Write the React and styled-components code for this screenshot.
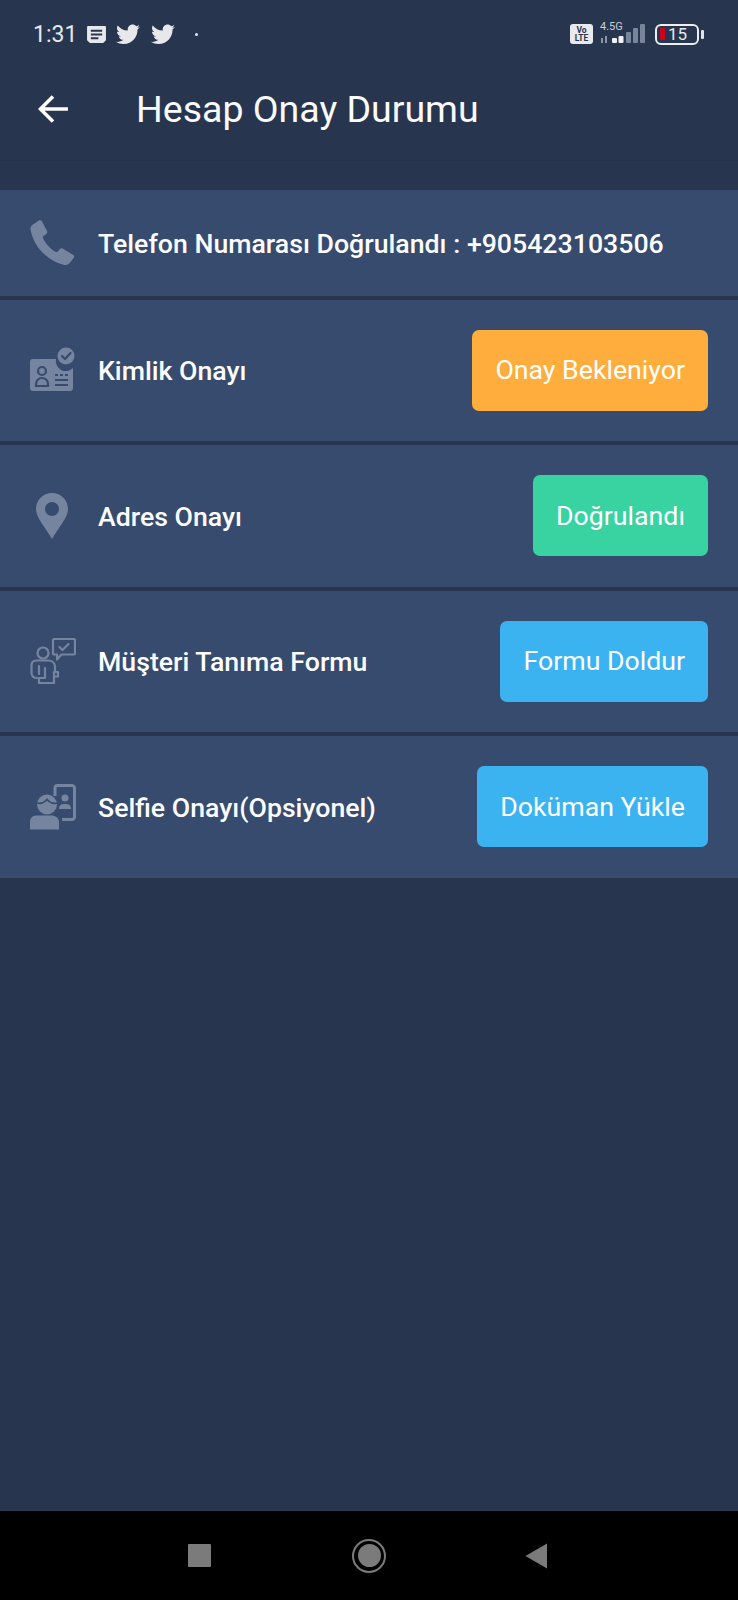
import React from "react";
import styled, { createGlobalStyle } from "styled-components";

const Global = createGlobalStyle`
  html, body { margin: 0; padding: 0; background: #27354f; }
  * { box-sizing: border-box; }
`;

const Screen = styled.div`
  width: 738px;
  height: 1600px;
  display: flex;
  flex-direction: column;
  background: #27354f;
  font-family: Roboto, "Liberation Sans", sans-serif;
  color: #fff;
  overflow: hidden;
`;

const StatusBar = styled.div`
  height: 68px;
  flex: none;
  display: flex;
  align-items: center;
  justify-content: space-between;
  padding: 0 39px 0 33px;
`;

const StatusGroup = styled.div`
  display: flex;
  align-items: center;
`;

const Clock = styled.span`
  font-size: 23px;
  color: #e6e8ec;
  margin-right: 10px;
`;

const Dot = styled.span`
  width: 3px;
  height: 3px;
  border-radius: 50%;
  background: #e6e8ec;
  margin-left: 9px;
`;

const VoLte = styled.div`
  width: 23px;
  height: 20px;
  border-radius: 3px;
  background: #e8eaee;
  color: #27354f;
  font-size: 8.5px;
  font-weight: 700;
  line-height: 8.5px;
  text-align: center;
  padding-top: 1.5px;
  margin-right: 7px;
`;

const Signal = styled.div`
  width: 46px;
  height: 34px;
  position: relative;
`;

const NetLabel = styled.span`
  position: absolute;
  left: 0;
  top: 3px;
  font-size: 11px;
  color: #c9ced7;
`;

const Battery = styled.div`
  width: 44px;
  height: 21px;
  margin-left: 9px;
  border: 2px solid #eceef1;
  border-radius: 6px;
  display: flex;
  align-items: center;
  padding-left: 3px;
  font-size: 17px;
  color: #e6e8ec;
  position: relative;
  &::after {
    content: "";
    position: absolute;
    right: -7px;
    top: 4px;
    width: 3px;
    height: 9px;
    border-radius: 1px;
    background: #dfe2e7;
  }
`;

const BatteryLevel = styled.span`
  width: 5px;
  height: 12px;
  border-radius: 1px;
  background: #d0021b;
  margin-right: 3px;
`;

const Header = styled.header`
  height: 93px;
  flex: none;
  display: flex;
  align-items: center;
  padding: 0 0 11px 38px;
  border-bottom: 1px solid #25324b;
`;

const BackButton = styled.div`
  width: 30px;
  height: 30px;
  display: flex;
  align-items: center;
  margin-right: 68px;
`;

const Title = styled.h1`
  margin: 0;
  font-size: 37.5px;
  font-weight: 400;
  color: #fbfbfc;
`;

const List = styled.div`
  margin-top: 28.5px;
  display: flex;
  flex-direction: column;
  gap: 4px;
`;

const Row = styled.div`
  height: ${(p) => (p.$short ? "106px" : "141.5px")};
  display: flex;
  align-items: center;
  background: #374b6e;
  padding: 0 30px 0 ${(p) => (p.$short ? "28px" : "30px")};
`;

const IconSlot = styled.div`
  width: ${(p) => (p.$short ? "70px" : "68px")};
  flex: none;
  display: flex;
  color: #76859f;
`;

const Label = styled.span`
  flex: 1;
  font-size: 26.7px;
  font-weight: 500;
  color: #fdfdfe;
  white-space: nowrap;
  padding-top: 2px;
`;

const COLORS = { orange: "#ffad3d", green: "#39d2a1", blue: "#3bb3f1" };

const Action = styled.button`
  height: 81px;
  border: 0;
  border-radius: 7px;
  padding: 0 23px;
  background: ${(p) => COLORS[p.$tone]};
  color: #fff;
  font-family: inherit;
  font-size: 26.7px;
  font-weight: 400;
  white-space: nowrap;
`;

const Spacer = styled.div`
  flex: 1;
`;

const NavBar = styled.nav`
  height: 90px;
  flex: none;
  background: #000;
  border-top: 1px solid #2f3a54;
  display: flex;
  align-items: center;
  padding: 0 0 0 188px;
`;

const NavSquare = styled.div`
  width: 23px;
  height: 23px;
  border-radius: 1px;
  background: #7b7b7b;
  margin-right: 141px;
`;

const NavCircle = styled.div`
  width: 34px;
  height: 34px;
  border-radius: 50%;
  border: 2px solid #7b7b7b;
  display: flex;
  align-items: center;
  justify-content: center;
  margin-right: 139px;
  &::after {
    content: "";
    width: 23px;
    height: 23px;
    border-radius: 50%;
    background: #7b7b7b;
  }
`;

const Twitter = () => (
  <svg width="24" height="21" viewBox="0 0 24 20" style={{ marginRight: 11 }}>
    <path fill="#e6e8ec" d="M23.9 2.4c-.9.4-1.8.7-2.8.8 1-.6 1.800-1.600 2.200-2.700-.9.6-2 1-3.100 1.200C19.300.7 18 .1 16.600.1c-2.700 0-4.900 2.200-4.900 4.900 0 .4 0 .8.100 1.100C7.700 5.900 4.100 4 1.700.9c-.4.700-.7 1.600-.7 2.500 0 1.700.9 3.200 2.200 4.100-.8 0-1.600-.2-2.200-.6v.1c0 2.400 1.700 4.400 3.900 4.800-.4.100-.8.200-1.300.2-.3 0-.6 0-.9-.1.600 2 2.400 3.400 4.600 3.400-1.700 1.300-3.800 2.100-6.100 2.100-.4 0-.8 0-1.200-.1 2.200 1.400 4.800 2.200 7.500 2.200 9.100 0 14-7.500 14-14v-.6c1-.7 1.800-1.600 2.400-2.500z" />
  </svg>
);

const PhoneIcon = () => (
  <svg width="48" height="48" viewBox="0 0 48 48">
    <path fill="currentColor" d="M2.500 10.500 C2 7.500 4 6 6.500 4.500 L11 1.500 C12.500 1 13.500 1.500 14 2.500 L19 12 C19.500 13.500 19 14.500 18 15.200 L15.500 17 C14.800 17.500 14.700 18.300 15 19 C17 24 22 29.500 27.300 32.800 C28.200 33.300 29 33.200 29.700 32.500 L32 30 C33 29.200 34 29.200 35 29.800 L45 35.700 C46.200 36.500 46.500 37.500 45.800 38.700 L42.500 43 C40.500 45.500 38.500 46.500 35.500 45.800 C18 41 5.500 27 2.500 10.500 Z" />
  </svg>
);

const IdIcon = () => (
  <svg width="46" height="46" viewBox="0 0 46 46">
    <path fill="currentColor" d="M3 12 H26 A10 10 0 0 0 43 21 V41 A3 3 0 0 1 40 44 H3 A3 3 0 0 1 0 41 V15 A3 3 0 0 1 3 12 Z" />
    <circle cx="36" cy="9" r="8.500" fill="currentColor" />
    <path fill="none" stroke="#374b6e" strokeWidth="2.200" strokeLinecap="round" strokeLinejoin="round" d="M32 9 l3 3 l5.500 -6" />
    <circle cx="12" cy="24" r="4" fill="none" stroke="#374b6e" strokeWidth="2.200" />
    <path fill="none" stroke="#374b6e" strokeWidth="2.200" d="M6 39 v-2 a6 6 0 0 1 12 0 v2 z" />
    <path fill="none" stroke="#374b6e" strokeWidth="2" strokeDasharray="3 2" d="M25 28 h13" />
    <path fill="none" stroke="#374b6e" strokeWidth="2" d="M25 33 h13 M25 38 h13" />
  </svg>
);

const PinIcon = () => (
  <svg width="32" height="46" viewBox="0 0 32 46" style={{ marginLeft: 6 }}>
    <path fill="currentColor" fillRule="evenodd" d="M16 0 C7 0 0 7 0 16 C0 25 10 35 16 46 C22 35 32 25 32 16 C32 7 25 0 16 0 Z M16 9 A7 7 0 1 1 15.990 9 Z" />
  </svg>
);

const ConsultIcon = () => (
  <svg width="46" height="46" viewBox="0 0 46 46" fill="none" stroke="currentColor" strokeWidth="2.200" strokeLinejoin="round" strokeLinecap="round">
    <path d="M24.500 1 H43.500 A1.500 1.500 0 0 1 45 2.500 V15 A1.500 1.500 0 0 1 43.500 16.500 H31.500 L27 21.500 V16.500 H24.500 A1.500 1.500 0 0 1 23 15 V2.500 A1.500 1.500 0 0 1 24.500 1 Z" />
    <path d="M29.500 9 l3 3 l6 -6" />
    <circle cx="13" cy="15" r="5.500" />
    <path d="M7 40 C3.500 40 1.500 38 1.500 35 V27 C1.500 24 3.500 22.500 7 22.500 H18 C22 22.500 25 25 25 29 V33" />
    <path d="M9 45 H24 V34 H28 V38.500 H24" />
    <path d="M9 45 V40 H15 V30 M9 28 V36" />
  </svg>
);

const SelfieIcon = () => (
  <svg width="46" height="46" viewBox="0 0 46 46">
    <path fill="none" stroke="currentColor" strokeWidth="3" d="M25 12 V4 A2.500 2.500 0 0 1 27.500 1.500 H42 A2.500 2.500 0 0 1 44.500 4 V33 A2.500 2.500 0 0 1 42 35.500 H32" />
    <circle cx="35" cy="14" r="3.500" fill="currentColor" />
    <path fill="currentColor" d="M29 25 C29 21 31 20 35 20 C39 20 41 21 41 25 Z" />
    <circle cx="17" cy="20.500" r="10" fill="currentColor" />
    <path fill="none" stroke="#374b6e" strokeWidth="1.800" d="M7 19 C11 20 14 19 17 15.500 C20 19 23 20 27 19" />
    <path fill="currentColor" d="M0 45.500 V38 C0 34 2.500 31.500 7 31.500 H21 C25.500 31.500 29 34 29 38 V45.500 Z" />
  </svg>
);

const rows = [
  { icon: <IdIcon />, label: "Kimlik Onayı", action: "Onay Bekleniyor", tone: "orange" },
  { icon: <PinIcon />, label: "Adres Onayı", action: "Doğrulandı", tone: "green" },
  { icon: <ConsultIcon />, label: "Müşteri Tanıma Formu", action: "Formu Doldur", tone: "blue" },
  { icon: <SelfieIcon />, label: "Selfie Onayı(Opsiyonel)", action: "Doküman Yükle", tone: "blue" },
];

export default function App() {
  return (
    <Screen>
      <Global />
      <StatusBar>
        <StatusGroup>
          <Clock>1:31</Clock>
          <svg width="19" height="17" viewBox="0 0 20 18" style={{ marginRight: 10 }}>
            <path fill="#e6e8ec" fillRule="evenodd" d="M1 0 H19 A1 1 0 0 1 20 1 V15 L17 18 H3 L0 15 V1 A1 1 0 0 1 1 0 Z M4 4 V6 H16 V4 Z M4 8 V10 H16 V8 Z M4 12 V14 H12 V12 Z" />
          </svg>
          <Twitter />
          <Twitter />
          <Dot />
        </StatusGroup>
        <StatusGroup>
          <VoLte>Vo<br />LTE</VoLte>
          <Signal>
            <NetLabel>4.5G</NetLabel>
            <svg width="46" height="34" viewBox="0 0 46 34" style={{ position: "absolute", left: 0, top: 0 }}>
              <path fill="#8a94a6" d="M1 21 h2 v5 h-2 z M5 19 h2 v7 h-2 z" />
              <rect x="12" y="21" width="5" height="5" rx="1" fill="#f0f1f3" />
              <rect x="18.500" y="19" width="5" height="7" rx="1" fill="#f0f1f3" />
              <rect x="26" y="15" width="5" height="11" rx="1" fill="#79859a" />
              <rect x="33" y="11" width="5" height="15" rx="1" fill="#79859a" />
              <rect x="40" y="7" width="5" height="19" rx="1" fill="#79859a" />
            </svg>
          </Signal>
          <Battery>
            <BatteryLevel />
            15
          </Battery>
        </StatusGroup>
      </StatusBar>
      <Header>
        <BackButton>
          <svg width="30" height="28" viewBox="0 0 32 30" fill="none" stroke="#fff" strokeWidth="3.800">
            <path d="M32 15 H3 M16 1.500 L2.500 15 L16 28.500" />
          </svg>
        </BackButton>
        <Title>Hesap Onay Durumu</Title>
      </Header>
      <List>
        <Row $short>
          <IconSlot $short><PhoneIcon /></IconSlot>
          <Label>Telefon Numarası Doğrulandı : +905423103506</Label>
        </Row>
        {rows.map((r) => (
          <Row key={r.label}>
            <IconSlot>{r.icon}</IconSlot>
            <Label>{r.label}</Label>
            <Action $tone={r.tone}>{r.action}</Action>
          </Row>
        ))}
      </List>
      <Spacer />
      <NavBar>
        <NavSquare />
        <NavCircle />
        <svg width="23" height="26" viewBox="0 0 23 26">
          <path fill="#7b7b7b" d="M22 0.500 V25.500 L0.500 13 Z" />
        </svg>
      </NavBar>
    </Screen>
  );
}
